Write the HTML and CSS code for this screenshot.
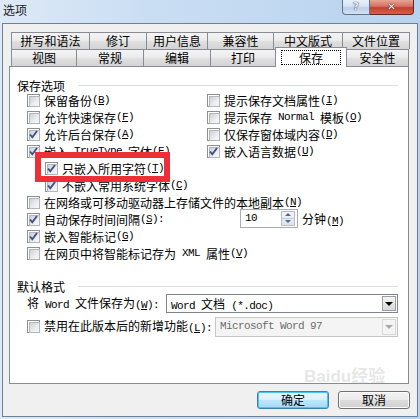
FILE: index.html
```html
<!DOCTYPE html>
<html lang="zh-CN">
<head>
<meta charset="utf-8">
<title>选项</title>
<link rel="stylesheet" href="styles.css">
</head>
<body>
<div class="window">
  <div class="titlebar">
    <span class="title">选项</span>
    <div class="caption">
      <div class="help">?</div>
      <div class="close">✕</div>
    </div>
  </div>
  <div class="client">
    <div class="tabs">
      <div class="tabrow r1">
        <div class="tab">拼写和语法</div>
        <div class="tab">修订</div>
        <div class="tab">用户信息</div>
        <div class="tab">兼容性</div>
        <div class="tab">中文版式</div>
        <div class="tab">文件位置</div>
      </div>
      <div class="tabrow r2">
        <div class="tab">视图</div>
        <div class="tab">常规</div>
        <div class="tab">编辑</div>
        <div class="tab">打印</div>
        <div class="tab sel"><span class="focus">保存</span></div>
        <div class="tab">安全性</div>
      </div>
    </div>
    <div class="panel">
      <div class="ghead">保存选项</div>
      <div class="opts">
        <div class="cbrow"><span class="cb"></span>保留备份<span class="m">(<u>B</u>)</span></div>
        <div class="cbrow"><span class="cb"></span>提示保存文档属性<span class="m">(<u>I</u>)</span></div>
        <div class="cbrow"><span class="cb"></span>允许快速保存<span class="m">(<u>F</u>)</span></div>
        <div class="cbrow"><span class="cb"></span>提示保存<span class="m"> Normal </span>模板<span class="m">(<u>O</u>)</span></div>
        <div class="cbrow"><span class="cb on"><svg viewBox="0 0 13 13"><path d="M3 6.5 L5.3 9.3 L10 3"/></svg></span>允许后台保存<span class="m">(<u>A</u>)</span></div>
        <div class="cbrow"><span class="cb"></span>仅保存窗体域内容<span class="m">(<u>D</u>)</span></div>
        <div class="cbrow"><span class="cb on"><svg viewBox="0 0 13 13"><path d="M3 6.5 L5.3 9.3 L10 3"/></svg></span>嵌入<span class="m"> TrueType </span>字体<span class="m">(<u>E</u>)</span></div>
        <div class="cbrow"><span class="cb on"><svg viewBox="0 0 13 13"><path d="M3 6.5 L5.3 9.3 L10 3"/></svg></span>嵌入语言数据<span class="m">(<u>U</u>)</span></div>
        <div class="cbrow full indent"><span class="cb on"><svg viewBox="0 0 13 13"><path d="M3 6.5 L5.3 9.3 L10 3"/></svg></span>只嵌入所用字符<span class="m">(<u>T</u>)</span></div>
        <div class="cbrow full indent"><span class="cb on"><svg viewBox="0 0 13 13"><path d="M3 6.5 L5.3 9.3 L10 3"/></svg></span>不嵌入常用系统字体<span class="m">(<u>C</u>)</span></div>
        <div class="cbrow full"><span class="cb"></span>在网络或可移动驱动器上存储文件的本地副本<span class="m">(<u>N</u>)</span></div>
        <div class="cbrow full"><span class="cb on"><svg viewBox="0 0 13 13"><path d="M3 6.5 L5.3 9.3 L10 3"/></svg></span>自动保存时间间隔<span class="m">(<u>S</u>):</span>
          <div class="spin"><span class="val m">10</span><span class="spinbtns"><span class="up"></span><span class="down"></span></span></div>
          <span class="after">分钟<span class="m">(<u>M</u>)</span></span>
        </div>
        <div class="cbrow full"><span class="cb on"><svg viewBox="0 0 13 13"><path d="M3 6.5 L5.3 9.3 L10 3"/></svg></span>嵌入智能标记<span class="m">(<u>G</u>)</span></div>
        <div class="cbrow full"><span class="cb"></span>在网页中将智能标记存为<span class="m"> XML </span>属性<span class="m">(<u>V</u>)</span></div>
      </div>
      <div class="ghead g2">默认格式</div>
      <div class="saverow">
        <span class="lbl">将<span class="m"> Word </span>文件保存为<span class="m">(<u>W</u>):</span></span>
        <div class="select"><span class="val"><span class="m">Word </span>文档<span class="m"> (*.doc)</span></span><span class="arrow"><i></i></span></div>
      </div>
      <div class="saverow dis">
        <span class="cb"></span><span class="lbl">禁用在此版本后的新增功能<span class="m">(<u>L</u>):</span></span>
        <div class="select disabled"><span class="val m">Microsoft Word 97</span><span class="arrow"><i></i></span></div>
      </div>
    </div>
    <div class="buttons">
      <div class="btn default">确定</div>
      <div class="btn">取消</div>
    </div>
  </div>
  <div class="redmark"></div>
  <div class="watermark">Baidu经验</div>
</div>
</body>
</html>
```

FILE: styles.css
```css
* { box-sizing: border-box; margin: 0; padding: 0; }
html, body { width: 420px; height: 419px; overflow: hidden; }
body {
  font-family: "Noto Sans CJK SC", "Noto Sans", sans-serif;
  font-size: 12px;
  color: #000;
  background: #b9d3ee;
}
.m {
  font-family: "Liberation Mono", monospace;
  font-size: 11px;
  letter-spacing: -0.6px;
  white-space: pre;
}
u { text-decoration: underline; text-underline-offset: 1px; }

.window {
  position: relative;
  width: 420px;
  height: 419px;
  display: flex;
  flex-direction: column;
  background: linear-gradient(90deg, #dde9f7 0%, #cadef3 35%, #b8d3ef 100%);
}
.titlebar {
  height: 23px;
  display: flex;
  justify-content: space-between;
  align-items: flex-start;
}
.title {
  padding: 2px 0 0 3px;
  line-height: 16px;
  font-size: 12px;
  color: #1b1b1b;
}
.caption { display: flex; margin-right: 6px; }
.help {
  width: 28px;
  height: 15px;
  border: 1px solid #61728d;
  border-top: none;
  border-radius: 0 0 0 4px;
  background: linear-gradient(#e9f1fa, #d3e2f2 45%, #bccfe7 55%, #d2e2f3);
  color: #e8eef5;
  font-family: "DejaVu Sans", sans-serif;
  font-weight: bold;
  font-size: 11px;
  line-height: 13px;
  text-align: center;
  text-shadow: 0 0 1px #3c4a5e, 0 0 1px #3c4a5e;
}
.close {
  width: 44px;
  height: 15px;
  border: 1px solid #5e2a24;
  border-left: none;
  border-top: none;
  border-radius: 0 0 4px 0;
  background: linear-gradient(#e7a595, #d47160 45%, #c1402e 55%, #d6604b);
  color: #fff;
  font-family: "DejaVu Sans", sans-serif;
  font-weight: bold;
  font-size: 10px;
  line-height: 13px;
  text-align: center;
  text-shadow: 0 0 1px #4a1410, 0 0 1px #4a1410;
}

.client {
  flex: 1;
  margin: 0 2px 2px 2px;
  border: 1px solid #6e8098;
  background: #f0f0f0;
  padding: 8px 8px 0 6px;
  display: flex;
  flex-direction: column;
}

.tabs { margin-left: 2px; width: 398px; position: relative; z-index: 1; }
.tabrow { display: flex; height: 17px; align-items: flex-end; }
.tab {
  height: 17px;
  border: 1px solid #898c95;
  border-bottom: none;
  margin-right: -1px;
  background: linear-gradient(#f4f4f4, #ececec 45%, #dfdfdf 55%, #d3d3d3);
  text-align: center;
  line-height: 15px;
  white-space: nowrap;
}
.r1 .tab:nth-child(1) { width: 79px; }
.r1 .tab:nth-child(2) { width: 58px; }
.r1 .tab:nth-child(3) { width: 62px; }
.r1 .tab:nth-child(4) { width: 67px; }
.r1 .tab:nth-child(5) { width: 70px; }
.r1 .tab:nth-child(6) { width: 68px; }
.r2 .tab:nth-child(1) { width: 66px; }
.r2 .tab:nth-child(2) { width: 68px; }
.r2 .tab:nth-child(3) { width: 68px; }
.r2 .tab:nth-child(4) { width: 66px; }
.r2 .tab:nth-child(5) { width: 72px; }
.r2 .tab:nth-child(6) { width: 63px; }
.tab.sel {
  height: 20px;
  margin-bottom: -1px;
  background: #fff;
  position: relative;
  z-index: 2;
  padding: 2px 5px 0 5px;
}
.focus {
  display: block;
  border: 1px dotted #000;
  line-height: 13px;
  height: 15px;
}

.panel {
  height: 318px;
  border: 1px solid #898c95;
  background: #fff;
  padding: 11px 10px 0 7px;
  display: flex;
  flex-direction: column;
}
.ghead {
  display: flex;
  align-items: center;
  height: 15px;
  line-height: 15px;
  white-space: nowrap;
}
.ghead::after {
  content: "";
  flex: 1;
  height: 1px;
  margin-left: 13px;
  background: #d5dfe5;
}
.ghead.g2 { margin-top: 17px; }

.opts {
  margin-left: 10px;
  margin-top: -1px;
  display: grid;
  grid-template-columns: 180px 1fr;
  grid-auto-rows: 17px;
}
.cbrow {
  display: flex;
  align-items: center;
  height: 17px;
  line-height: 17px;
  white-space: nowrap;
}
.cbrow.full { grid-column: 1 / span 2; }
.cbrow.indent { padding-left: 18px; }

.cb {
  position: relative;
  flex: none;
  width: 13px;
  height: 13px;
  margin-right: 4px;
  border: 1px solid #8f8f8f;
  background: #fff;
  padding: 1px;
}
.cb::before {
  content: "";
  display: block;
  width: 9px;
  height: 9px;
  border: 1px solid #b3b6bb;
  background: linear-gradient(135deg, #cdd1d6, #eceef0 60%, #f7f7f7);
}
.cb svg {
  position: absolute;
  left: -1px;
  top: -1px;
  width: 13px;
  height: 13px;
}
.cb svg path {
  fill: none;
  stroke: #3d5288;
  stroke-width: 1.9;
  stroke-linejoin: miter;
}

.spin {
  margin-left: 76px;
  width: 58px;
  height: 19px;
  border: 1px solid #abadb3;
  background: #fff;
  display: flex;
  margin-top: -3px;
}
.spin .val { flex: 1; padding-left: 4px; line-height: 17px; }
.spinbtns {
  width: 14px;
  margin: 1px 2px 1px 0;
  display: flex;
  flex-direction: column;
  border: 1px solid #b8bcc4;
  background: linear-gradient(#f3f5f8, #dde3ea);
}
.spinbtns span {
  flex: 1;
  display: flex;
  align-items: center;
  justify-content: center;
}
.spinbtns .up { border-bottom: 1px solid #c4c9d0; }
.spinbtns .up::before {
  content: "";
  border-left: 3px solid transparent;
  border-right: 3px solid transparent;
  border-bottom: 3px solid #4d6a9c;
}
.spinbtns .down::before {
  content: "";
  border-left: 3px solid transparent;
  border-right: 3px solid transparent;
  border-top: 3px solid #4d6a9c;
}
.after { margin-left: 4px; }

.saverow {
  margin-left: 10px;
  display: flex;
  align-items: center;
  height: 19px;
  white-space: nowrap;
}
.saverow .lbl { line-height: 19px; }
.saverow.dis { margin-top: 4px; margin-left: 10px; }
.select {
  flex: 1;
  height: 19px;
  margin-left: 7px;
  border: 1px solid #7f848c;
  background: #fff;
  display: flex;
}
.saverow.dis .select { margin-left: 3px; height: 20px; }
.select .val { flex: 1; padding-left: 4px; line-height: 17px; }
.select .arrow {
  width: 14px;
  margin: 1px;
  border: 1px solid #9a9da3;
  background: linear-gradient(#f5f5f5, #e6e6e6 50%, #d9d9d9);
  display: flex;
  align-items: center;
  justify-content: center;
}
.select .arrow i {
  display: block;
  border-left: 4px solid transparent;
  border-right: 4px solid transparent;
  border-top: 4px solid #000;
}
.select.disabled { background: #f4f4f4; border-color: #c6c6c6; color: #6d6d6d; }
.select.disabled .arrow { border-color: #d8d8d8; background: #f4f4f4; }
.select.disabled .arrow i { border-top-color: #a8a8a8; }

.buttons {
  display: flex;
  justify-content: flex-end;
  gap: 9px;
  margin-top: 7px;
  margin-right: -1px;
}
.btn {
  width: 72px;
  height: 18px;
  border: 1px solid #707070;
  border-radius: 3px;
  background: linear-gradient(#f2f2f2, #ebebeb 48%, #dddddd 52%, #cfcfcf);
  text-align: center;
  line-height: 16px;
  box-shadow: inset 0 0 0 1px #fbfbfb;
}
.btn.default {
  border-color: #3c7fb1;
  box-shadow: inset 0 0 0 1px #48c5f3;
  background: linear-gradient(#eaf6fd, #d9f0fc 48%, #bee6fd 52%, #a7d9f5);
}

.redmark {
  position: absolute;
  left: 35px;
  top: 152px;
  width: 135px;
  height: 30px;
  border: 6px solid #ee2f38;
}
.watermark {
  position: absolute;
  left: 304px;
  top: 368px;
  font-family: "Liberation Sans", "Noto Sans CJK SC", sans-serif;
  font-weight: bold;
  font-size: 17px;
  line-height: 18px;
  color: rgba(170, 170, 170, 0.3);
  pointer-events: none;
}
```
